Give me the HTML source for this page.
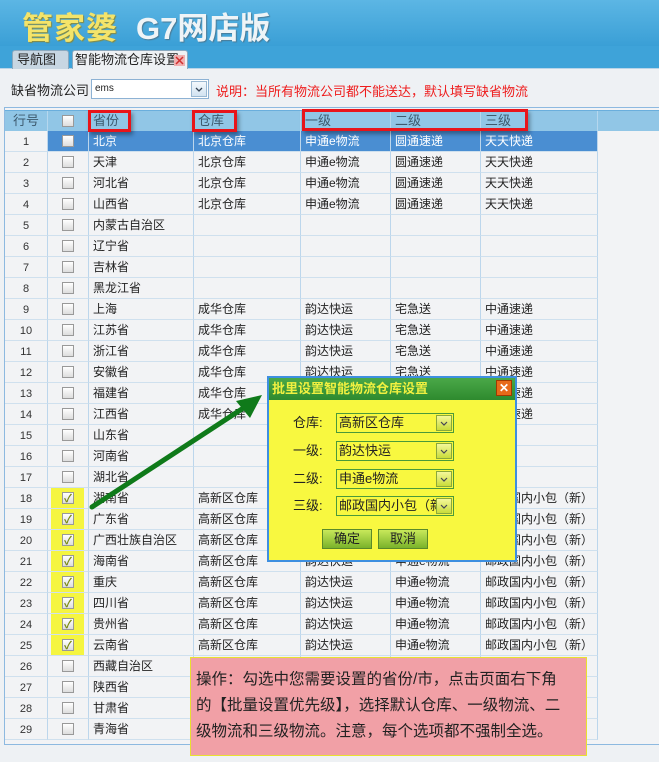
<!DOCTYPE html>
<html><head><meta charset="utf-8">
<style>
*{box-sizing:border-box;margin:0;padding:0}
body{width:659px;height:762px;overflow:hidden;background:#eef1f4;font-family:"Liberation Sans","Noto Sans CJK SC",sans-serif;font-size:12px;color:#222;position:relative}
.hdr{position:absolute;left:0;top:0;width:659px;height:46px;background:linear-gradient(#5cb6e4,#3a9fd6)}
.logo1{position:absolute;left:22px;top:3px;font-size:31px;font-weight:bold;color:#f4e46a;text-shadow:1px 1px 1px #8a8a3a;letter-spacing:1px}
.logo2{position:absolute;left:136px;top:3px;font-size:31px;font-weight:bold;color:#eef4f7;text-shadow:1px 1px 1px #4a7a95}
.tabbar{position:absolute;left:0;top:46px;width:659px;height:23px;background:#3ea3d9;border-bottom:1px solid #b9d4e8}
.tab{position:absolute;top:4px;height:19px;border:1px solid #8aa9c0;border-bottom:none;border-radius:3px 3px 0 0;font-size:13px;line-height:18px;padding:0 2px;white-space:nowrap}
.t1{left:12px;width:57px;background:#c7d6e2;padding-left:4px}
.t2{left:72px;width:116px;background:#eef1f4}
.cl{position:absolute;top:80px;font-size:13px;left:11px}
.sel{position:absolute;left:91px;top:79px;width:118px;height:20px;border:1px solid #8db2d4;background:#fff;font-size:10px;padding:3px 0 0 3px}
.arr{position:absolute;right:1px;top:1px;width:16px;height:16px;border:1px solid #9ab8d2;background:linear-gradient(#f3f8fc,#d2e3f1)}
.note{position:absolute;left:216px;top:81px;font-size:13px;color:#ee1c1c}
.tbl{position:absolute;left:4px;top:107px;width:655px;height:638px;border:1px solid #8db9e0;border-right:none;background:#f2f3f5}
.hrow{position:absolute;left:5px;top:110px;width:654px;height:21px;background:#91c6e6;border-top:1px solid #6aaedc}
.c{position:absolute;height:21px;line-height:20px;border-right:1px solid #bcd6ec;border-bottom:1px solid #cfe0ee;white-space:nowrap;overflow:hidden;font-size:12px;padding-left:4px}
.hrow .c{color:#3d5a6e;font-size:13px;border-right:1px solid #b5d7ee;border-bottom:none}
.cb{display:inline-block;width:12px;height:12px;border:1px solid #999;background:linear-gradient(#fff,#ddd);vertical-align:middle;margin-top:-2px;position:relative}
.ck::after{content:"✓";position:absolute;left:1px;top:-4px;color:#7a8a10;font-size:11px;font-weight:bold}
.num{color:#333;font-size:11px}
.sr .c{background:#4a8ed2;color:#fff}
.rb{position:absolute;border:3px solid #e8141a;box-shadow:2px 3px 4px rgba(0,0,0,.35)}
.yh{position:absolute;left:51px;top:487px;width:33px;height:168px;background:#f5f540}
.dlg{position:absolute;left:267px;top:376px;width:250px;height:186px;background:#f8f840;border:2px solid #3e8fe0}
.dt{height:22px;background:linear-gradient(#4aa848,#2e8a2e);color:#f0f040;font-weight:bold;font-size:13px;line-height:22px;padding-left:3px}
.dx{position:absolute;right:3px;top:2px;width:16px;height:16px;background:#e86a1a;border:1px solid #a03a00;color:#fff;font-size:12px;line-height:14px;text-align:center;font-weight:bold}
.lb{position:absolute;left:24px;font-size:13px;line-height:20px;height:20px}
.ds{position:absolute;left:67px;width:118px;height:20px;border:1px solid #4a9a3a;background:#f8f840;font-size:13px;line-height:18px;padding-left:2px;overflow:hidden;white-space:nowrap}
.ds .a{position:absolute;right:1px;top:1px;width:16px;height:16px;background:linear-gradient(#f4f79a,#c9dc3a);border:1px solid #8aa83a}
.btn{position:absolute;top:151px;width:50px;height:20px;background:linear-gradient(#c8e85a,#7ab22a);border:1px solid #5a8a2a;font-size:13px;text-align:center;line-height:18px}
.pink{position:absolute;left:190px;top:657px;width:397px;height:99px;background:#f1a0a6;border:1px solid #e8e030;font-size:15.5px;line-height:26px;padding:9px 0 0 5px;color:#222;white-space:nowrap}
</style></head><body>
<div class="hdr"><div class="logo1">管家婆</div><div class="logo2">G7网店版</div></div>
<div class="tabbar">
<div class="tab t1">导航图</div>
<div class="tab t2">智能物流仓库设置<svg style="position:absolute;right:2px;top:4px" width="11" height="11"><rect width="11" height="11" fill="#f0b0b0"/><path d="M2 2L9 9M9 2L2 9" stroke="#d03030" stroke-width="1.5"/></svg></div>
</div>
<div class="cl">缺省物流公司</div>
<div class="sel">ems<div class="arr"><svg width="14" height="14"><path d="M4 6l3 3 3-3" stroke="#345" stroke-width="1.3" fill="none"/></svg></div></div>
<div class="note">说明：当所有物流公司都不能送达，默认填写缺省物流</div>
<div class="tbl"></div>
<div class="hrow">
<div class="c" style="left:0;width:43px;text-align:center;padding:0">行号</div>
<div class="c" style="left:43px;width:41px;text-align:center;padding:0"><span class="cb"></span></div>
<div class="c" style="left:84px;width:105px">省份</div>
<div class="c" style="left:189px;width:107px">仓库</div>
<div class="c" style="left:296px;width:90px">一级</div>
<div class="c" style="left:386px;width:90px">二级</div>
<div class="c" style="left:476px;width:117px">三级</div>
</div>
<div class="yh"></div>
<div id="rows" style="position:absolute;left:5px;top:131px">
</div>
<div class="rb" style="left:88px;top:110px;width:43px;height:22px"></div>
<div class="rb" style="left:192px;top:110px;width:45px;height:22px"></div>
<div class="rb" style="left:302px;top:109px;width:226px;height:22px"></div>
<svg style="position:absolute;left:0;top:0" width="659" height="762"><path d="M92 507L248 405" stroke="#0f7a1a" stroke-width="5" stroke-linecap="round"/><path d="M262 395L236 401L250 418Z" fill="#0f7a1a"/></svg>
<div class="dlg">
<div class="dt">批里设置智能物流仓库设置</div><div class="dx">✕</div>
<div class="lb" style="top:35px">仓库:</div><div class="ds" style="top:35px">高新区仓库<div class="a"><svg width="14" height="14"><path d="M4 6l3 3 3-3" stroke="#445" stroke-width="1.2" fill="none"/></svg></div></div>
<div class="lb" style="top:63px">一级:</div><div class="ds" style="top:63px">韵达快运<div class="a"><svg width="14" height="14"><path d="M4 6l3 3 3-3" stroke="#445" stroke-width="1.2" fill="none"/></svg></div></div>
<div class="lb" style="top:91px">二级:</div><div class="ds" style="top:91px">申通e物流<div class="a"><svg width="14" height="14"><path d="M4 6l3 3 3-3" stroke="#445" stroke-width="1.2" fill="none"/></svg></div></div>
<div class="lb" style="top:118px">三级:</div><div class="ds" style="top:118px">邮政国内小包（新<div class="a"><svg width="14" height="14"><path d="M4 6l3 3 3-3" stroke="#445" stroke-width="1.2" fill="none"/></svg></div></div>
<div class="btn" style="left:53px">确定</div><div class="btn" style="left:109px">取消</div>
</div>
<div class="pink">操作：勾选中您需要设置的省份/市，点击页面右下角<br>的【批量设置优先级】，选择默认仓库、一级物流、二<br>级物流和三级物流。注意，每个选项都不强制全选。</div>
<script>
var d=[
["北京","北京仓库","申通e物流","圆通速递","天天快递"],
["天津","北京仓库","申通e物流","圆通速递","天天快递"],
["河北省","北京仓库","申通e物流","圆通速递","天天快递"],
["山西省","北京仓库","申通e物流","圆通速递","天天快递"],
["内蒙古自治区"],["辽宁省"],["吉林省"],["黑龙江省"],
["上海","成华仓库","韵达快运","宅急送","中通速递"],
["江苏省","成华仓库","韵达快运","宅急送","中通速递"],
["浙江省","成华仓库","韵达快运","宅急送","中通速递"],
["安徽省","成华仓库","韵达快运","宅急送","中通速递"],
["福建省","成华仓库","韵达快运","宅急送","中通速递"],
["江西省","成华仓库","韵达快运","宅急送","中通速递"],
["山东省"],["河南省"],["湖北省"]];
["湖南省","广东省","广西壮族自治区","海南省","重庆","四川省","贵州省","云南省"].forEach(function(p){d.push([p,"高新区仓库","韵达快运","申通e物流","邮政国内小包（新）"])});
["西藏自治区","陕西省","甘肃省","青海省"].forEach(function(p){d.push([p])});
var L=[0,43,84,189,296,386,476],W=[43,41,105,107,90,90,117],h="";
d.forEach(function(r,i){var y=i*21,ck=(i>=17&&i<=24),s=i==0;
h+='<div class="'+(s?'sr':'')+'" style="position:absolute;left:0;top:'+y+'px">';
for(var j=0;j<7;j++){var t;
if(j==0)t='<span class="num">'+(i+1)+'</span>';else if(j==1)t='<span class="cb'+(ck?' ck':'')+'"></span>';else t=r[j-2]||'';
var bg=(j==0)?'background:#f2f3f5;color:#333;':(ck&&j==1?'background:transparent;':'');
h+='<div class="c" style="left:'+L[j]+'px;width:'+W[j]+'px;'+bg+(j<2?'text-align:center;padding:0;':'')+'">'+t+'</div>';}
h+='</div>';});
document.getElementById('rows').innerHTML=h;
</script>
</body></html>
